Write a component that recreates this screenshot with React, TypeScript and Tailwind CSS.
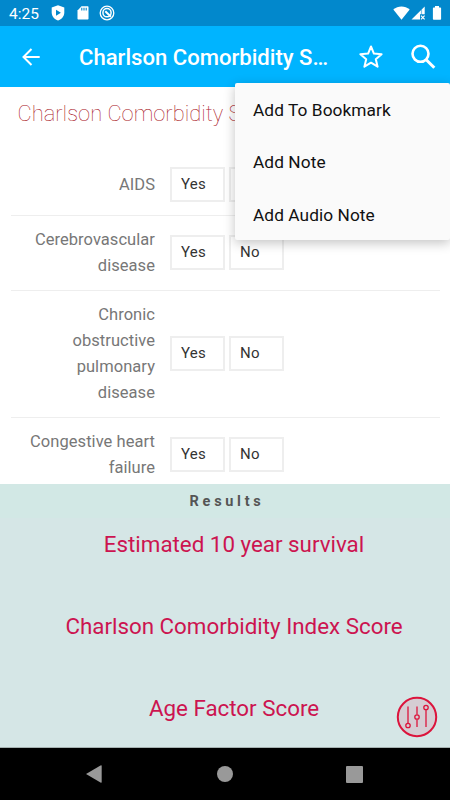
import React from "react";

interface QuestionT {
  label: string;
  className: string;
}

const menuItems = ["Add To Bookmark", "Add Note", "Add Audio Note"];

const questions: QuestionT[] = [
  { label: "AIDS", className: "h-[63px] pt-[2px]" },
  { label: "Cerebrovascular disease", className: "h-[75px]" },
  { label: "Chronic obstructive pulmonary disease", className: "h-[127px]" },
  { label: "Congestive heart failure", className: "h-[75px]" },
];

const results = [
  "Estimated 10 year survival",
  "Charlson Comorbidity Index Score",
  "Age Factor Score",
];

const StatusBar: React.FC = () => {
  return (
    <div className="flex h-[26px] shrink-0 items-center bg-[#0288cc] text-white">
      <span className="mt-[3px] ml-[9px] w-[42px] text-[15.5px] leading-none">4:25</span>
      <svg width="14" height="16" viewBox="0 0 14 16" className="shrink-0">
        <path d="M7 .3 13.3 2.6v4.8c0 3.7-2.6 6.7-6.3 8.1C3.3 14.1.7 11.1.7 7.4V2.6z" fill="white" />
        <path d="M5 4.8v6l4.9-3z" fill="#0288cc" />
      </svg>
      <svg width="12" height="14" viewBox="0 0 12 14" className="ml-3 shrink-0">
        <path d="M4.5.3h6c.6 0 1 .4 1 1v11.2c0 .6-.4 1-1 1h-9c-.6 0-1-.4-1-1V4.5z" fill="white" />
        <path d="M4.8 1.8v2.7M7 1.8v2.7M9.2 1.8v2.7" stroke="#0288cc" strokeWidth="1.1" />
      </svg>
      <svg width="16" height="16" viewBox="0 0 16 16" className="ml-[10px] shrink-0" fill="none" stroke="white">
        <circle cx="8" cy="8" r="6.8" strokeWidth="1.3" />
        <circle cx="8" cy="7.7" r="4.1" strokeWidth="1.5" />
        <path d="m6.3 6.3 5.6 5.4" strokeWidth="2" />
      </svg>
      <svg width="17" height="14" viewBox="0 0 17 14" className="ml-auto shrink-0">
        <path d="M.3 3.6C5-.7 12-.7 16.7 3.6L8.5 13.7z" fill="white" />
      </svg>
      <svg width="15" height="14" viewBox="0 0 15 14" className="ml-[1px] shrink-0">
        <path d="M.5 13.5 13.7.5v7.8H9v5.2z" fill="white" />
        <path d="M10.5 3.5v6" stroke="#0288cc" strokeWidth="1.2" opacity=".5" />
        <path d="m10 9.7 3.6 3.6m0-3.6L10 13.3" stroke="white" strokeWidth="1.2" />
      </svg>
      <svg width="10" height="14" viewBox="0 0 10 14" className="mr-[8px] ml-[6px] shrink-0">
        <path d="M3 0h4v1.5h1.3c.5 0 .8.3.8.8v10.7c0 .5-.3.8-.8.8H1.7c-.5 0-.8-.3-.8-.8V2.3c0-.5.3-.8.8-.8H3z" fill="white" />
      </svg>
    </div>
  );
};

const AppBar: React.FC = () => {
  return (
    <header className="flex h-[61px] shrink-0 items-center bg-[#00b4ff] text-white">
      <svg width="18" height="18" viewBox="0 0 18 18" className="ml-[22px] shrink-0" fill="none" stroke="white" strokeWidth="2">
        <path d="M17.7 9H1.7M9.5 1 1.5 9l8 8" />
      </svg>
      <h1 className="mt-[2px] ml-[39px] w-[260px] text-[22.1px] leading-none font-medium whitespace-nowrap">
        Charlson Comorbidity S…
      </h1>
      <svg width="24" height="24" viewBox="0 0 24 24" className="ml-5 shrink-0" fill="none" stroke="white" strokeWidth="2">
        <path
          d="m12 1.5 2.9 7.1 7.7.6-5.8 5 1.8 7.5-6.6-4-6.6 4 1.8-7.5-5.8-5 7.7-.6z"
          strokeLinejoin="round"
        />
      </svg>
      <svg width="26" height="26" viewBox="0 0 26 26" className="ml-[27px] shrink-0" fill="none" stroke="white">
        <circle cx="10.5" cy="9.8" r="8" strokeWidth="2.6" />
        <path d="m16 15.5 8.3 8.3" strokeWidth="3" />
      </svg>
    </header>
  );
};

const OverflowMenu: React.FC = () => {
  return (
    <ul className="absolute top-[83px] right-0 h-[157px] w-[215px] rounded-[2px] bg-[#fafafa] pt-[1.5px] shadow-[0_3px_12px_rgba(0,0,0,0.24)]">
      {menuItems.map((item) => (
        <li
          key={item}
          className="flex h-[52.5px] items-center pl-[18px] text-[17.3px] tracking-[0.07px] text-[#111]"
        >
          {item}
        </li>
      ))}
    </ul>
  );
};

const ChoiceButton: React.FC<{ label: string }> = ({ label }) => {
  return (
    <button className="h-[35px] w-[55px] shrink-0 border-2 border-[#eee] bg-white pl-[9px] text-left text-[15px] tracking-[0.3px] text-[#333]">
      {label}
    </button>
  );
};

const QuestionRow: React.FC<QuestionT> = ({ label, className }) => {
  return (
    <div className={`flex shrink-0 items-center border-b border-[#eee] ${className}`}>
      <p className="w-[144px] pl-4 text-right text-[16.5px] leading-[26.2px] tracking-[0.05px] text-[#777]">
        {label}
      </p>
      <div className="-mt-px ml-[15px] flex gap-[4px]">
        <ChoiceButton label="Yes" />
        <ChoiceButton label="No" />
      </div>
    </div>
  );
};

const ResultsPanel: React.FC = () => {
  return (
    <section className="relative h-[264px] shrink-0 border-b border-[#a5b1b0] bg-[#d5e6e6] text-center">
      <h3 className="h-[34px] bg-[#d2e8e5] pt-[8px] pl-[4px] text-[14.5px] leading-5 font-bold tracking-[3.7px] text-[#555]">
        Results
      </h3>
      <div className="flex flex-col pt-[6px] pl-[18px]">
        {results.map((label) => (
          <p
            key={label}
            className="h-[81.8px] text-[22.35px] leading-[40px] text-[#cc1450]"
          >
            {label}
          </p>
        ))}
      </div>
      <svg width="42" height="42" viewBox="0 0 42 42" className="absolute right-[12px] bottom-[9px]" fill="none" stroke="#dc143c">
        <circle cx="21" cy="21" r="19.2" fill="#d5cdd3" strokeWidth="2" />
        <path d="M12 10.5v17M21 10.5v8M21 23.5v7.5M30 14v17" strokeWidth="1.3" />
        <circle cx="12" cy="29.5" r="2.2" strokeWidth="1.3" />
        <circle cx="21" cy="21" r="2.2" strokeWidth="1.3" />
        <circle cx="30" cy="11.5" r="2.2" strokeWidth="1.3" />
      </svg>
    </section>
  );
};

const NavigationBar: React.FC = () => {
  return (
    <nav className="flex h-[52px] shrink-0 items-center bg-black">
      <svg width="17" height="19" viewBox="0 0 17 19" className="ml-[86px]" fill="#999">
        <path d="M0 9 14.5.5q1.2-.6 1.2.5v16q0 1.1-1.2.5z" />
      </svg>
      <div className="ml-[114px] size-4 rounded-full bg-[#999]" />
      <div className="ml-[113px] size-[17px] rounded-[1px] bg-[#999]" />
    </nav>
  );
};

const App: React.FC = () => {
  return (
    <main className="relative flex h-[800px] w-[450px] flex-col overflow-hidden bg-white font-['Roboto',sans-serif]">
      <StatusBar />
      <AppBar />
      <div className="h-[397px] shrink-0 overflow-hidden">
        <h2 className="h-[66px] pt-[11px] pl-[17.5px] text-[21.9px] leading-8 font-thin tracking-[0.02px] whitespace-nowrap text-[#a8141c]">
          Charlson Comorbidity Score
        </h2>
        <div className="mr-[10px] ml-[11px] flex flex-col">
          {questions.map((question) => (
            <QuestionRow key={question.label} {...question} />
          ))}
        </div>
      </div>
      <ResultsPanel />
      <NavigationBar />
      <OverflowMenu />
    </main>
  );
};

export default App;
